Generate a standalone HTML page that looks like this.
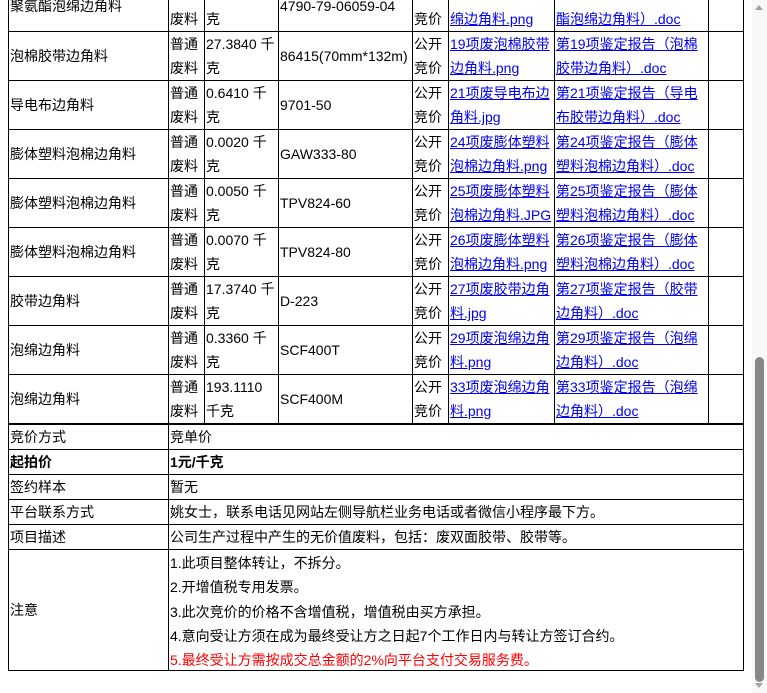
<!DOCTYPE html>
<html><head><meta charset="utf-8"><style>
body{margin:0;width:767px;height:693px;overflow:hidden;background:#fff;position:relative;font-family:"Liberation Sans","Noto Sans CJK SC",sans-serif;font-size:14px;color:#000}
.h{position:absolute;height:1px;background:#000}
.v{position:absolute;width:1px;background:#000}
.t{position:absolute;line-height:24px;white-space:nowrap}
a{color:#00e;text-decoration:underline}
</style></head><body>
<div id="g"></div>
<div style="position:absolute;left:752px;top:0;width:15px;height:693px;background:#f8f8f8"></div>
<div style="position:absolute;left:755px;top:357px;width:9px;height:325px;background:#888;border-radius:5px"></div>
<div style="position:absolute;left:755px;top:5px;width:0;height:0;border-left:4px solid transparent;border-right:4px solid transparent;border-bottom:5px solid #a3a3a3"></div>
<div style="position:absolute;left:755px;top:683px;width:0;height:0;border-left:4px solid transparent;border-right:4px solid transparent;border-top:5px solid #a3a3a3"></div>
<script>
var g=document.getElementById('g'),h='';
function H(x,y,w,th){h+='<div class="h" style="left:'+x+'px;top:'+y+'px;width:'+w+'px;height:'+(th||1)+'px"></div>';}
function V(x,y,hh){h+='<div class="v" style="left:'+x+'px;top:'+y+'px;height:'+hh+'px"></div>';}
function T(x,y,s,st){h+='<div class="t" style="left:'+x+'px;top:'+y+'px;'+(st||'')+'">'+s+'</div>';}
var rows=[
["聚氨酯泡绵边角料","","","4790-79-06059-04","","绵边角料.png","酯泡绵边角料）.doc"],
["泡棉胶带边角料","27.3840 千","克","86415(70mm*132m)","19项废泡棉胶带","边角料.png","第19项鉴定报告（泡棉","胶带边角料）.doc"],
["导电布边角料","0.6410 千","克","9701-50","21项废导电布边","角料.jpg","第21项鉴定报告（导电","布胶带边角料）.doc"],
["膨体塑料泡棉边角料","0.0020 千","克","GAW333-80","24项废膨体塑料","泡棉边角料.png","第24项鉴定报告（膨体","塑料泡棉边角料）.doc"],
["膨体塑料泡棉边角料","0.0050 千","克","TPV824-60","25项废膨体塑料","泡棉边角料.JPG","第25项鉴定报告（膨体","塑料泡棉边角料）.doc"],
["膨体塑料泡棉边角料","0.0070 千","克","TPV824-80","26项废膨体塑料","泡棉边角料.png","第26项鉴定报告（膨体","塑料泡棉边角料）.doc"],
["胶带边角料","17.3740 千","克","D-223","27项废胶带边角","料.jpg","第27项鉴定报告（胶带","边角料）.doc"],
["泡绵边角料","0.3360 千","克","SCF400T","29项废泡绵边角","料.png","第29项鉴定报告（泡绵","边角料）.doc"],
["泡绵边角料","193.1110","千克","SCF400M","33项废泡绵边角","料.png","第33项鉴定报告（泡绵","边角料）.doc"]];
var xs=[8,168,204,278,412,448,554,708,743];
for(var i=0;i<rows.length;i++){
 var y=-17+49*i,r=rows[i];
 H(8,y+48,736);
 for(var j=0;j<xs.length;j++)V(xs[j],y,49);
 if(i==0){T(10,y+11,r[0]);T(170,y+24,'废料');T(206,y+24,'克');T(280,y+11,r[3]);T(414,y+24,'竞价');T(450,y+24,'<a>'+r[5]+'</a>');T(556,y+24,'<a>'+r[6]+'</a>');continue;}
 T(10,y+12,r[0]);T(170,y,'普通');T(170,y+24,'废料');T(206,y,r[1]);T(206,y+24,r[2]);
 T(280,y+12,r[3]);T(414,y,'公开');T(414,y+24,'竞价');
 T(450,y,'<a>'+r[4]+'</a>');T(450,y+24,'<a>'+r[5]+'</a>');
 T(556,y,'<a>'+r[6]+'</a>');T(556,y+24,'<a>'+r[7]+'</a>');
}
H(8,423,736,2);
var b=[["竞价方式","竞单价"],["<b>起拍价</b>","<b>1元/千克</b>"],["签约样本","暂无"],["平台联系方式","姚女士，联系电话见网站左侧导航栏业务电话或者微信小程序最下方。"],["项目描述","公司生产过程中产生的无价值废料，包括：废双面胶带、胶带等。"]];
var yy=425;
for(var k=0;k<b.length;k++){T(10,yy,b[k][0]);T(170,yy,b[k][1]);yy+=25;H(8,yy-1,736);}
T(10,yy+48,'注意');
var n=["1.此项目整体转让，不拆分。","2.开增值税专用发票。","3.此次竞价的价格不含增值税，增值税由买方承担。","4.意向受让方须在成为最终受让方之日起7个工作日内与转让方签订合约。","<span style=\"color:#f00\">5.最终受让方需按成交总金额的2%向平台支付交易服务费。</span>"];
for(var m=0;m<5;m++)T(170,yy+1+24.3*m,n[m]);
H(8,670,736);
V(8,424,247);V(168,424,247);V(743,424,247);
g.innerHTML=h;
</script>
</body></html>
